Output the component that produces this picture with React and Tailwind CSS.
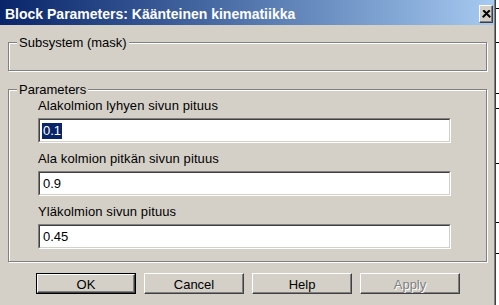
import React from "react";

const font = { fontFamily: '"Liberation Sans", Arial, sans-serif' };

function GroupBox({ title, className, children }) {
  return (
    <div
      className={`relative border border-[#808080] shadow-[inset_1px_1px_0_#ffffff,1px_1px_0_#ffffff] ${className}`}
    >
      <span className="absolute -top-[8px] left-[8px] px-[2px] bg-[#d4d0c8] text-[13px] leading-[15px] text-black">
        {title}
      </span>
      {children}
    </div>
  );
}

function Field({ label, value, selected, className }) {
  return (
    <div className={`flex flex-col ${className || ""}`}>
      <div className="h-[15px] text-[13px] leading-[15px] text-black whitespace-nowrap tracking-[0.1px]">{label}</div>
      <div className="mt-[5px] w-[413px] h-[25px] border border-t-[#808080] border-l-[#808080] border-b-white border-r-white">
        <div className="w-full h-full bg-white border border-t-[#404040] border-l-[#404040] border-b-[#d4d0c8] border-r-[#d4d0c8] flex items-center pl-[2px]">
          {selected ? (
            <span className="bg-[#0a246a] text-white text-[13px] leading-[16px] px-[1px]">{value}</span>
          ) : (
            <span className="text-black text-[13px] leading-[16px] pl-[1px]">{value}</span>
          )}
        </div>
      </div>
    </div>
  );
}

function Btn({ children, isDefault, disabled }) {
  const inner = (
    <div className="w-full h-full border border-t-white border-l-white border-b-[#404040] border-r-[#404040] shadow-[inset_-1px_-1px_0_#808080] flex items-center justify-center pt-[2px]">
      <span
        className={`text-[13px] leading-[15px] ${disabled ? "text-[#808080] [text-shadow:1px_1px_0_#ffffff]" : "text-black"}`}
      >
        {children}
      </span>
    </div>
  );
  return (
    <div className={`w-[100px] h-[21px] ${isDefault ? "border border-black" : ""}`}>{inner}</div>
  );
}

export default function App() {
  return (
    <div className="w-[499px] h-[305px] flex bg-white overflow-hidden" style={font}>
      <div className="w-[496px] h-full flex flex-col bg-[#d4d0c8] border-r border-[#404040] shadow-[inset_-1px_0_0_#808080]">
        {/* Title bar */}
        <div className="h-[25px] mr-[1px] flex items-center justify-between bg-gradient-to-r from-[#0a246a] to-[#a6caf0] pl-[5px] pr-[1px]">
          <span className="text-white font-bold text-[14px] leading-[16px] pt-[2px] whitespace-nowrap">
            {"Block Parameters: K\u00e4\u00e4nteinen kinematiikka"}
          </span>
          <div className="w-[14px] h-[18px] mt-[3px] bg-[#d4d0c8] border border-t-white border-l-white border-b-[#404040] border-r-[#404040] shadow-[inset_-1px_-1px_0_#808080] flex items-center justify-center">
            <svg width="9" height="8" viewBox="0 0 9 8">
              <path d="M1 0.5 L8 7.5 M8 0.5 L1 7.5 M2 0.5 L8.5 7 M7 0.5 L0.5 7" stroke="#000" strokeWidth="1.3" fill="none" />
            </svg>
          </div>
        </div>

        <div className="flex flex-col pl-[8px] pr-[8px]">
          <GroupBox title="Subsystem (mask)" className="mt-[17px] h-[29px]" />

          <GroupBox title="Parameters" className="mt-[18px] h-[173px]">
            <div className="flex flex-col pt-[8px] pl-[29px]">
              <Field label="Alakolmion lyhyen sivun pituus" value="0.1" selected />
              <Field label={"Ala kolmion pitk\u00e4n sivun pituus"} value="0.9" className="mt-[8px]" />
              <Field label={"Yl\u00e4kolmion sivun pituus"} value="0.45" className="mt-[8px]" />
            </div>
          </GroupBox>
        </div>

        <div className="mt-[11px] pl-[36px] flex gap-[8px]">
          <Btn isDefault>OK</Btn>
          <Btn>Cancel</Btn>
          <Btn>Help</Btn>
          <Btn disabled>Apply</Btn>
        </div>
      </div>

      <svg width="3" height="305" viewBox="0 0 3 305" className="shrink-0">
        <rect x="0" y="0" width="3" height="305" fill="#ffffff" />
        <g stroke="#000" strokeWidth="1">
          <line x1="0" y1="8.5" x2="3" y2="8.5" />
          <line x1="0" y1="42.5" x2="3" y2="42.5" />
          <line x1="0" y1="93.5" x2="3" y2="93.5" />
          <line x1="0" y1="108.5" x2="3" y2="108.5" />
          <line x1="0" y1="163.5" x2="3" y2="163.5" />
          <line x1="0" y1="222.5" x2="3" y2="222.5" />
          <line x1="0" y1="253.5" x2="3" y2="253.5" />
        </g>
      </svg>
    </div>
  );
}
